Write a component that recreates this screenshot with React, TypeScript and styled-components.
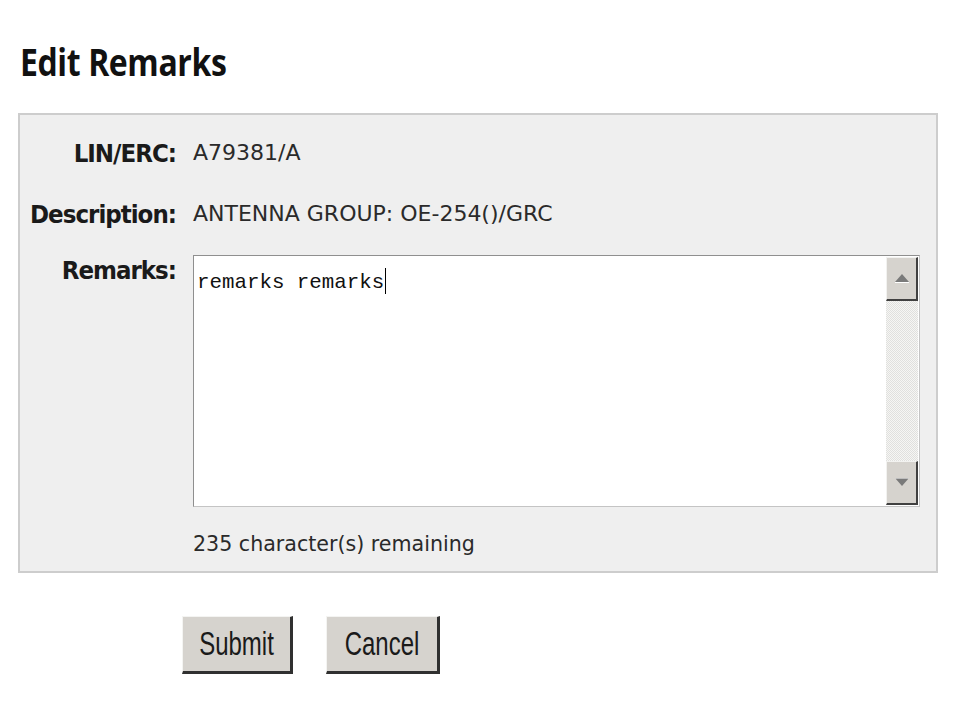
import React from 'react'
import styled, { createGlobalStyle } from 'styled-components'

const GlobalStyle = createGlobalStyle`
  body {
    margin: 0;
    background: #ffffff;
    font-family: 'DejaVu Sans', Verdana, sans-serif;
    color: #222222;
  }
`

const Page = styled.div`
  width: 960px;
  height: 720px;
  overflow: hidden;
`

const Title = styled.h1`
  margin: 0;
  height: 113px;
  padding: 32px 0 0 20px;
  box-sizing: border-box;
  font-family: 'Open Sans', 'DejaVu Sans', sans-serif;
  font-weight: 700;
  font-size: 32px;
  line-height: 40px;
  color: #111111;
  letter-spacing: -0.4px;
  transform: scaleY(1.18);
  transform-origin: left top;
`

const Panel = styled.div`
  margin-left: 18px;
  width: 920px;
  height: 460px;
  box-sizing: border-box;
  border: 2px solid #cdcdcd;
  background: #efefef;
  display: grid;
  grid-template-columns: 156px 1fr;
  grid-auto-rows: auto;
  column-gap: 17px;
  row-gap: 21px;
  align-content: start;
  padding: 18px 16px 0 0;
`

const Label = styled.div`
  align-self: start;
  text-align: right;
  font-weight: 700;
  font-size: 23px;
  line-height: 40px;
  color: #1a1a1a;
  letter-spacing: -1px;
  transform: scaleY(1.1);
`

const TopLabel = styled(Label)`
  line-height: 30px;
`

const Value = styled.div<{ $size?: number }>`
  font-size: ${(p) => p.$size ?? 22}px;
  line-height: 40px;
  color: #2a2a2a;
`

const TextBox = styled.div`
  height: 252px;
  box-sizing: border-box;
  border: 1px solid #8f8f8f;
  border-right-color: #c4c4c4;
  border-bottom-color: #c4c4c4;
  background: #ffffff;
  display: flex;
`

const Area = styled.div`
  flex: 1;
  padding: 12px 0 0 3px;
  font-family: 'Liberation Mono', 'Courier New', monospace;
  font-size: 20.8px;
  line-height: 22px;
  color: #111111;
`

const Caret = styled.span`
  display: inline-block;
  width: 1px;
  height: 26px;
  background: #000000;
  vertical-align: -6px;
  margin-left: 1px;
`

const ScrollBar = styled.div`
  width: 32px;
  margin: 1px 1px 1px 0;
  display: flex;
  flex-direction: column;
  background-color: #eeeeec;
  background-image: conic-gradient(
    #e0e0de 25%,
    #f6f6f4 0 50%,
    #e0e0de 0 75%,
    #f6f6f4 0
  );
  background-size: 2px 2px;
`

const ScrollButton = styled.div`
  height: 44px;
  background: #d6d3ce;
  border-top: 1px solid #f2f2f0;
  border-left: 1px solid #f2f2f0;
  border-right: 2px solid #404040;
  border-bottom: 2px solid #404040;
  box-sizing: border-box;
  display: flex;
  align-items: center;
  justify-content: center;
`

const Track = styled.div`
  flex: 1;
`

const Remaining = styled(Value)`
  line-height: 32px;
`

const Actions = styled.div`
  display: flex;
  gap: 33px;
  padding: 43px 0 0 182px;
`

const Button = styled.button<{ $width: number }>`
  width: ${(p) => p.$width}px;
  height: 58px;
  padding: 0;
  background: #d6d3ce;
  border-top: 1px solid #f4f4f2;
  border-left: 1px solid #f4f4f2;
  border-right: 3px solid #303030;
  border-bottom: 3px solid #303030;
  box-sizing: border-box;
  font-family: 'Liberation Sans', Arial, sans-serif;
  font-size: 24px;
  color: #1a1a1a;
  display: flex;
  align-items: center;
  justify-content: center;
`

const ButtonText = styled.span`
  display: inline-block;
  transform: scaleY(1.38);
`

const Arrow = ({ up }: { up?: boolean }) => (
  <svg width="14" height="9" viewBox="0 0 14 9">
    <polygon points={up ? '7,0 14,8 0,8' : '0,0 14,0 7,8'} fill="#7a7a7a" />
    <line x1="0" y1={up ? 8.5 : 0} x2="14" y2={up ? 8.5 : 0} stroke="#ffffff" strokeWidth="1" />
  </svg>
)

const App: React.FC = () => {
  return (
    <Page>
      <GlobalStyle />
      <Title>Edit Remarks</Title>
      <Panel>
        <Label>LIN/ERC:</Label>
        <Value>A79381/A</Value>
        <Label>Description:</Label>
        <Value>ANTENNA GROUP: OE-254()/GRC</Value>
        <TopLabel>Remarks:</TopLabel>
        <TextBox>
          <Area>
            remarks remarks
            <Caret />
          </Area>
          <ScrollBar>
            <ScrollButton>
              <Arrow up />
            </ScrollButton>
            <Track />
            <ScrollButton>
              <Arrow />
            </ScrollButton>
          </ScrollBar>
        </TextBox>
        <div />
        <Remaining $size={20.6}>235 character(s) remaining</Remaining>
      </Panel>
      <Actions>
        <Button $width={111}>
          <ButtonText>Submit</ButtonText>
        </Button>
        <Button $width={114}>
          <ButtonText>Cancel</ButtonText>
        </Button>
      </Actions>
    </Page>
  )
}

export default App
